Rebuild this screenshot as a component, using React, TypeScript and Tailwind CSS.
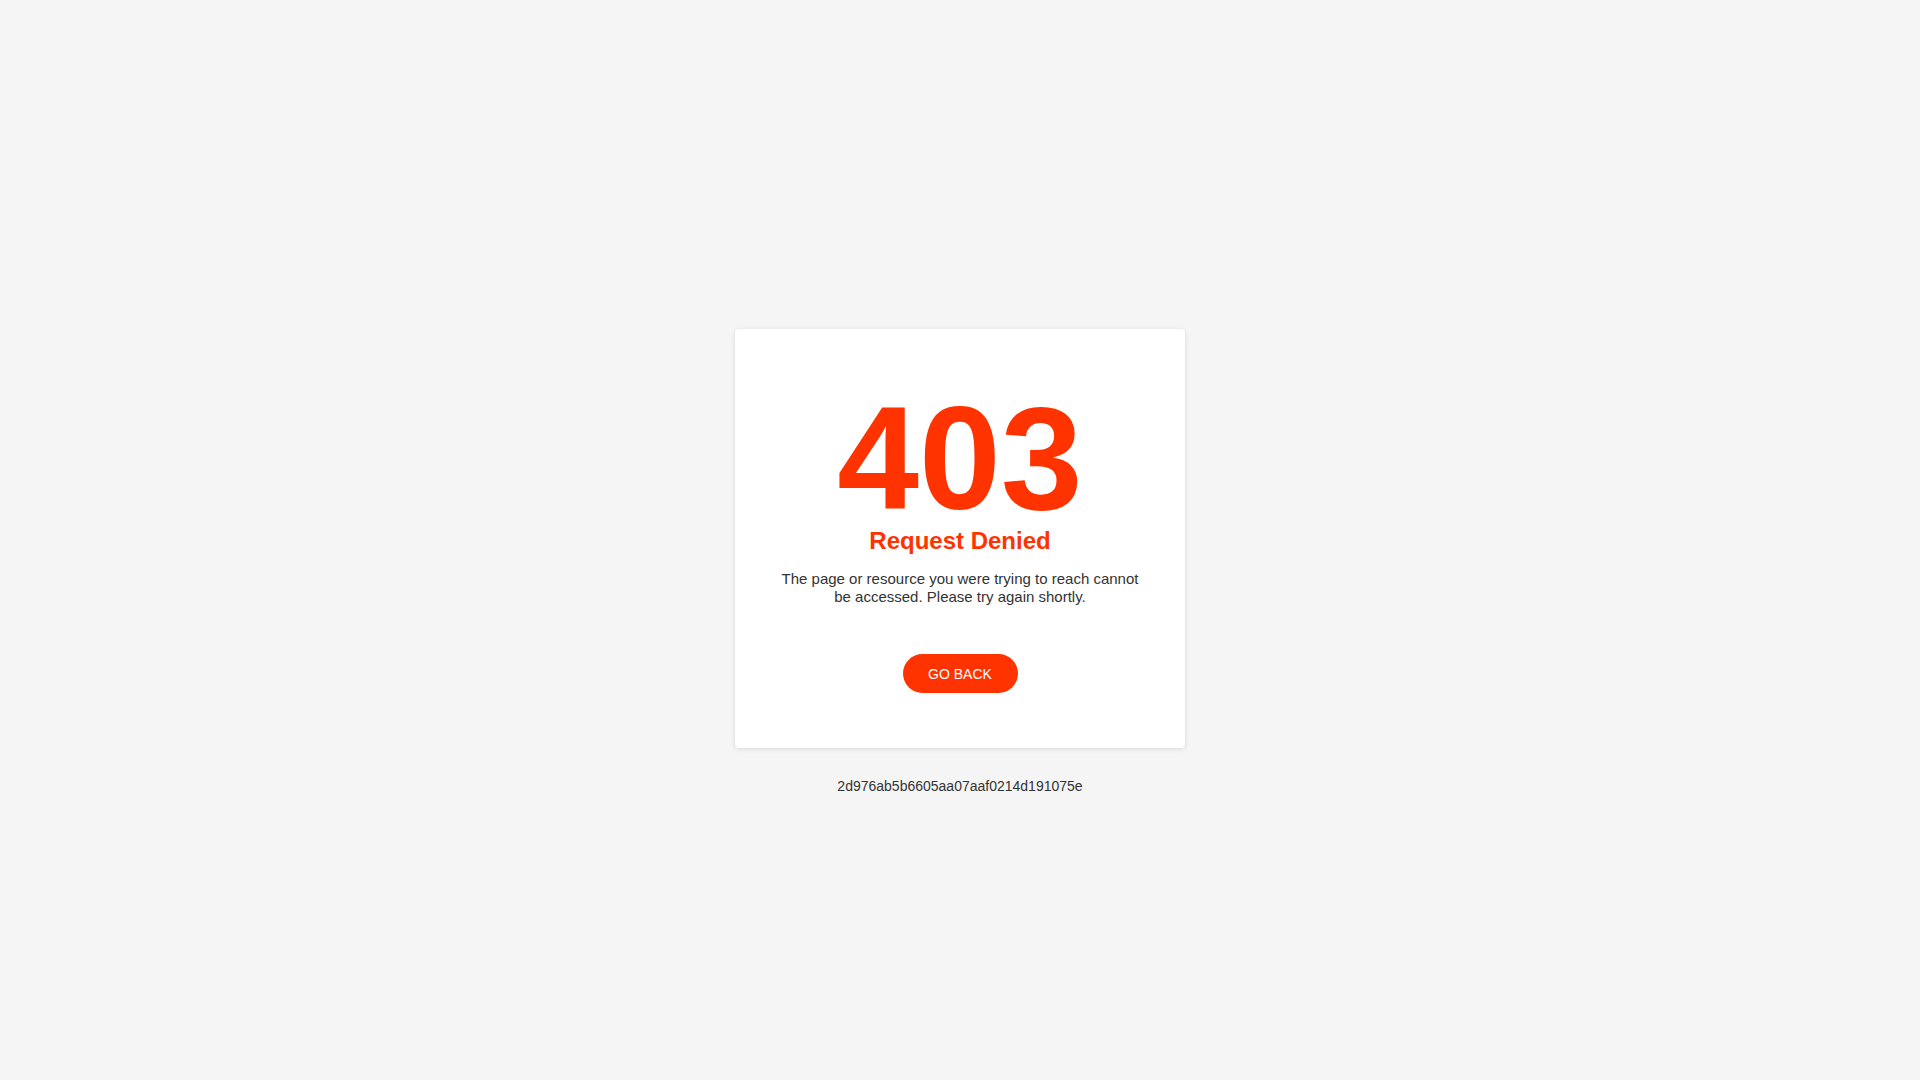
export default function App() {
  return (
    <div
      className="min-h-screen bg-[#f5f5f5] flex flex-col items-center pt-[329px]"
      style={{ fontFamily: '"Liberation Sans", Arial, sans-serif' }}
    >
      <div className="w-[450px] bg-white rounded-[4px] shadow-[0_1px_5px_rgba(0,0,0,0.12)] flex flex-col items-center pt-[61px] pb-[55px]">
        <h1 className="text-[147px] leading-[137px] font-bold text-[#ff3300]">403</h1>
        <h2 className="text-[24px] leading-[28px] font-bold text-[#ff3300]">Request Denied</h2>
        <p className="mt-[15px] w-[366px] text-center text-[15px] leading-[17.5px] text-[#333333]">
          The page or resource you were trying to reach cannot be accessed. Please try again shortly.
        </p>
        <button className="mt-[49px] w-[115px] h-[39px] rounded-full bg-[#ff3300] text-white text-[14px] leading-[16px]">
          GO BACK
        </button>
      </div>
      <p className="mt-[30px] text-[14px] leading-[16px] text-[#333333]">2d976ab5b6605aa07aaf0214d191075e</p>
    </div>
  );
}
